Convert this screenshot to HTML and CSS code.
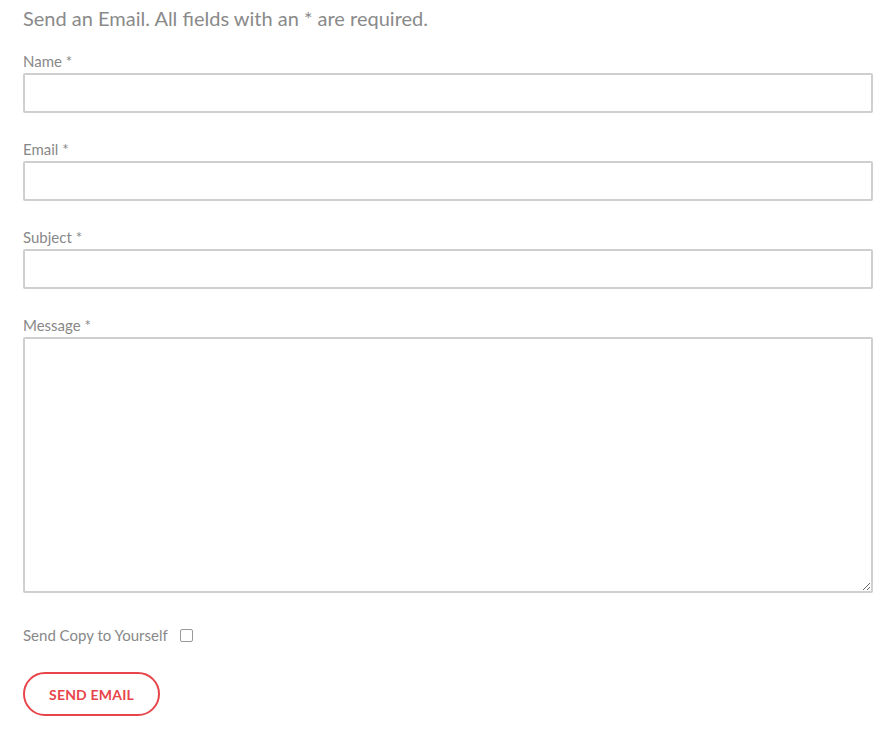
FILE: index.html
```html
<!DOCTYPE html>
<html>
<head>
<meta charset="utf-8">
<link rel="stylesheet" href="styles.css">
</head>
<body>
<form class="form">
  <h2 class="intro">Send an Email. All fields with an * are required.</h2>
  <div class="field">
    <label class="label">Name *</label>
    <input class="input" type="text">
  </div>
  <div class="field">
    <label class="label">Email *</label>
    <input class="input" type="text">
  </div>
  <div class="field">
    <label class="label">Subject *</label>
    <input class="input" type="text">
  </div>
  <div class="field">
    <label class="label">Message *</label>
    <textarea class="textarea"></textarea>
  </div>
  <div class="copy">
    <span class="copy-label">Send Copy to Yourself</span>
    <span class="check"></span>
  </div>
  <button class="send" type="button">SEND EMAIL</button>
</form>
</body>
</html>
```
FILE: styles.css
```css
html, body {
  margin: 0;
  padding: 0;
  background: #fff;
}
body {
  font-family: "Lato", "Open Sans", sans-serif;
  color: #888;
}
.form {
  padding: 5px 15px 0 23px;
  display: flex;
  flex-direction: column;
}
.intro {
  margin: 0 0 21px 0;
  font-size: 20px;
  font-weight: 400;
  line-height: 26px;
  color: #8a8a8a;
}
.field {
  display: flex;
  flex-direction: column;
  margin-bottom: 27px;
}
.label {
  font-size: 15px;
  line-height: 18px;
  color: #888;
  margin-bottom: 3px;
}
.input, .textarea {
  box-sizing: border-box;
  width: 850px;
  height: 40px;
  border: 2px solid #cfcfcf;
  border-radius: 2px;
  margin: 0;
  padding: 6px 10px;
  background: #fff;
  font: inherit;
}
.textarea {
  height: 256px;
  resize: vertical;
}
.copy {
  display: flex;
  align-items: center;
  gap: 12px;
  margin-top: 6px;
  font-size: 15px;
  line-height: 18px;
  color: #888;
}
.check {
  width: 11px;
  height: 11px;
  border: 1px solid #999;
  border-radius: 2px;
}
.send {
  align-self: flex-start;
  margin-top: 28px;
  width: 137px;
  height: 44px;
  border: 2px solid #e8454b;
  border-radius: 22px;
  background: #fff;
  color: #e8454b;
  font-family: "Lato", sans-serif;
  font-weight: 700;
  font-size: 14px;
  letter-spacing: 0.2px;
}
```
